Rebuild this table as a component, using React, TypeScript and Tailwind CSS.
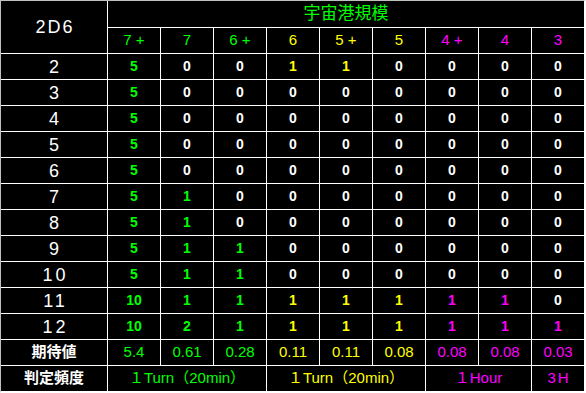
const G = 'text-[#00ff00]';
const Y = 'text-[#ffff00]';
const M = 'text-[#ff00ff]';

const heads = [
  { label: '7 +', c: G },
  { label: '7', c: G },
  { label: '6 +', c: G },
  { label: '6', c: Y },
  { label: '5 +', c: Y },
  { label: '5', c: Y },
  { label: '4 +', c: M },
  { label: '4', c: M },
  { label: '3', c: M },
];

const rows: { label: string; vals: number[] }[] = [
  { label: '2', vals: [5, 0, 0, 1, 1, 0, 0, 0, 0] },
  { label: '3', vals: [5, 0, 0, 0, 0, 0, 0, 0, 0] },
  { label: '4', vals: [5, 0, 0, 0, 0, 0, 0, 0, 0] },
  { label: '5', vals: [5, 0, 0, 0, 0, 0, 0, 0, 0] },
  { label: '6', vals: [5, 0, 0, 0, 0, 0, 0, 0, 0] },
  { label: '7', vals: [5, 1, 0, 0, 0, 0, 0, 0, 0] },
  { label: '8', vals: [5, 1, 0, 0, 0, 0, 0, 0, 0] },
  { label: '9', vals: [5, 1, 1, 0, 0, 0, 0, 0, 0] },
  { label: '10', vals: [5, 1, 1, 0, 0, 0, 0, 0, 0] },
  { label: '11', vals: [10, 1, 1, 1, 1, 1, 1, 1, 0] },
  { label: '12', vals: [10, 2, 1, 1, 1, 1, 1, 1, 1] },
];

const expected = ['5.4', '0.61', '0.28', '0.11', '0.11', '0.08', '0.08', '0.08', '0.03'];

const cell = 'bg-black flex items-center justify-center';

export default function App() {
  return (
    <div
      className="w-[586px] h-[393px] bg-white border-t border-l border-[#c0c0c0] border-r-2 border-b-2 border-r-white border-b-white"
      style={{ fontFamily: '"Liberation Sans", "Noto Sans CJK JP", sans-serif' }}
    >
      <div className="grid grid-cols-[106px_repeat(9,52px)] grid-rows-[26px_repeat(14,25px)] gap-px">
        <div className={`${cell} row-span-2 text-white text-[18px] tracking-[2px] pl-[2px]`}>2D6</div>
        <div className={`${cell} col-span-9 ${G} text-[17px]`}>宇宙港規模</div>
        {heads.map((h) => (
          <div key={h.label} className={`${cell} ${h.c} text-[15px] whitespace-pre`}>
            {h.label}
          </div>
        ))}

        {rows.map((r) => (
          <>
            <div key={r.label} className={`${cell} text-white text-[18px] tracking-[3px] pl-[3px] pt-[2px]`}>
              {r.label}
            </div>
            {r.vals.map((v, i) => (
              <div key={r.label + i} className={`${cell} text-[14px] font-bold ${v === 0 ? 'text-white' : heads[i].c}`}>
                {v}
              </div>
            ))}
          </>
        ))}

        <div className={`${cell} text-white text-[15px] font-bold`}>期待値</div>
        {expected.map((e, i) => (
          <div key={'e' + i} className={`${cell} text-[15px] ${heads[i].c}`}>
            {e}
          </div>
        ))}

        <div className={`${cell} text-white text-[15px] font-bold`}>判定頻度</div>
        <div className={`${cell} col-span-3 text-[15px] ${G}`}>１Turn（20min）</div>
        <div className={`${cell} col-span-3 text-[15px] ${Y}`}>１Turn（20min）</div>
        <div className={`${cell} col-span-2 text-[15px] ${M}`}>１Hour</div>
        <div className={`${cell} text-[15px] tracking-[2px] pl-[2px] ${M}`}>3H</div>
      </div>
    </div>
  );
}
